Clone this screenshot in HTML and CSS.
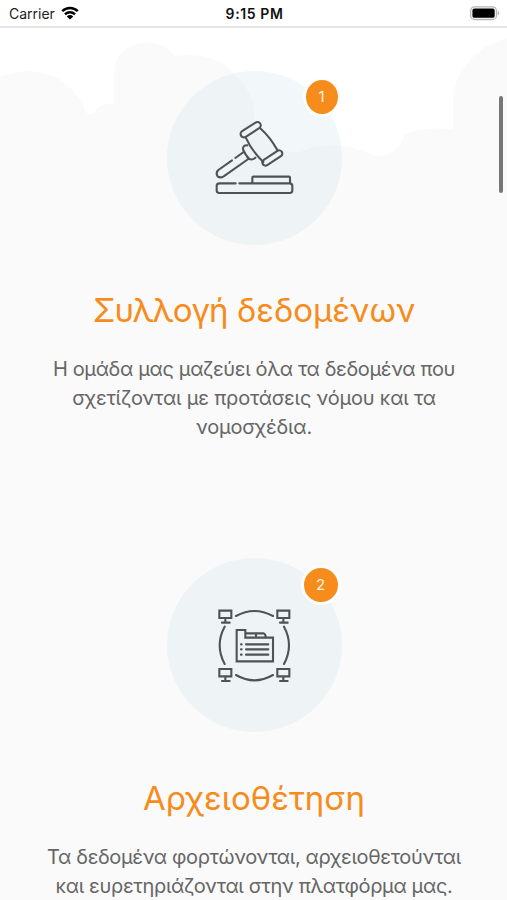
FILE: index.html
```html
<!DOCTYPE html>
<html lang="el">
<head>
    <meta charset="UTF-8">
    <meta name="viewport" content="width=device-width, initial-scale=1.0">
    <title>Συλλογή δεδομένων</title>
    <link rel="stylesheet" href="styles.css">
</head>
<body>
    <div class="status-bar">
        <div class="carrier">
            <span>Carrier</span>
            <svg class="wifi" viewBox="0 0 18 14">
                <path d="M1.2 5.2a11.2 11.2 0 0 1 15.6 0M4 8.3a7.2 7.2 0 0 1 10 0" fill="none" stroke="#000" stroke-width="2.5"/>
                <path d="M9 13.6 5.8 10.4a4.6 4.6 0 0 1 6.4 0z"/>
            </svg>
        </div>
        <div class="time">9:15 PM</div>
        <div class="battery-wrap">
            <svg class="battery" viewBox="0 0 31 15">
                <rect x=".7" y=".7" width="26.6" height="13" rx="4" fill="#fff" stroke="#b5b5b5" stroke-width="1.3"/>
                <rect x="2.5" y="2.4" width="23" height="9.6" rx="2"/>
                <path d="M28.7 5c2.1.6 2.1 3.8 0 4.4z" fill="#b5b5b5"/>
            </svg>
        </div>
    </div>

    <div class="steps">
        <svg class="clouds" viewBox="0 28 507 152">
            <path d="M0 180V77C30 64 62 74 76 95Q83 102 85 112Q92 118 98 107Q105 103 114 104V72C115 40 159 33 174 56C197 53 219 57 232 72C249 87 257 105 254 124C264 138 277 151 298 153C320 142 344 144 366 152Q379 159 391 153Q399 149 405 134Q422 127 453 129V99C454 72 478 45 507 38V180z"/>
        </svg>

        <div class="step">
            <div class="step-icon">
                <svg class="icon" viewBox="-3 -6 270 270">
                    <rect x="88" y="34" width="68" height="20" rx="10" transform="rotate(-33 122 44)"/>
                    <rect x="153" y="119.500" width="68" height="19" rx="9.500" transform="rotate(-33 187 129)"/>
                    <path d="M150 39Q181 67 202 105M107 67Q125 108 160 141"/>
                    <path d="M112 91Q98 90 99 103Q106 119 117 131Q126 137 136 128M101 109l15 23"/>
                    <path d="M66 136 25 165Q16 174 23 184Q31 190 41 184L115 132M76 129 101 111"/>
                    <path d="M77 205H28q-8 0-8 8v13q0 8 8 8h211q8 0 8-8v-13q0-8-8-8H88M127 205v-17q0-3 3-3h107q3 0 3 3v17"/>
                </svg>
                <span class="badge badge-first">1</span>
            </div>
            <h2><span class="tight">Συλλογή</span> δεδομένων</h2>
            <p>Η ομάδα μας μαζεύει όλα τα δεδομένα που<br><span class="loose">σχετίζονται με προτάσεις νόμου και τα</span><br><span class="loose">νομοσχέδια.</span></p>
        </div>

        <div class="step">
            <div class="step-icon">
                <svg class="icon icon-archive" viewBox="-21 -18 270 270">
                    <g id="screen">
                        <path d="M10 14h36v22H10zM28 36v14M18 50h23"/>
                    </g>
                    <use href="#screen" x="174"/>
                    <use href="#screen" y="175"/>
                    <use href="#screen" x="174" y="175"/>
                    <path d="M60 30Q115 0 171 30M60 207Q115 239 171 207M26 62Q-4 117 26 174M204 62Q234 117 204 174"/>
                    <path d="M62 72h26v23h83v71H62zM88 82h32v13M120 82h22q6 1 8 13M90 115h67M90 130h67M90 146h67M75 115h2M75 130h2M75 146h2"/>
                </svg>
                <span class="badge">2</span>
            </div>
            <h2 class="lower">Αρχειοθέτηση</h2>
            <p>Τα δεδομένα φορτώνονται, αρχειοθετούνται<br>και ευρετηριάζονται στην πλατφόρμα μας.</p>
        </div>
    </div>

    <div class="scrollbar"></div>
</body>
</html>
```

FILE: styles.css
```css
:root {
    --primary-color: #f68c1b;
    --text-color: #666666;
    --icon-color: #505354;
    --section-bg: #fafafa;
}

* {
    box-sizing: border-box;
}

body {
    height: 900px;
    margin: 0;
    overflow: hidden;
    font-family: Inter, "Noto Sans", sans-serif;
    color: var(--text-color);
    background-color: var(--section-bg);
}

.status-bar {
    display: flex;
    align-items: center;
    height: 28px;
    padding: 0 7px 0 9px;
    border-bottom: 2px solid #e6e6e6;
    background: #fff;
    color: #222;
    font-size: 14px;
}

.carrier,
.battery-wrap {
    display: flex;
    flex: 1;
    align-items: center;
}

.carrier {
    gap: 6px;
}

.battery-wrap {
    justify-content: flex-end;
}

.wifi {
    width: 18px;
    height: 14px;
}

.battery {
    width: 30px;
    height: 15px;
}

.time {
    font-weight: 600;
    letter-spacing: 0.6px;
    color: #111;
}

.steps {
    position: relative;
    height: 872px;
    padding: 43px 0 0 1px;
    overflow: hidden;
}

.clouds {
    position: absolute;
    top: 0;
    left: 0;
    width: 507px;
    height: 152px;
    background: #fff;
    fill: var(--section-bg);
}

.step {
    position: relative;
    display: flex;
    flex-direction: column;
    align-items: center;
    height: 487px;
    text-align: center;
}

.step-icon {
    position: relative;
    display: flex;
    align-items: center;
    justify-content: center;
    width: 175px;
    height: 174px;
    border-radius: 50%;
    background: rgba(210, 225, 235, 0.28);
}

.icon {
    width: 90px;
    height: 90px;
    fill: none;
    stroke: var(--icon-color);
    stroke-width: 6.3;
    stroke-linecap: round;
    stroke-linejoin: round;
}

.icon-archive {
    stroke-linejoin: miter;
}

.badge {
    position: absolute;
    top: 7px;
    right: 1px;
    width: 40px;
    height: 40px;
    border: 3px solid #fdfdfd;
    border-radius: 50%;
    background: var(--primary-color);
    color: #fff3e4;
    font-size: 15px;
    line-height: 34px;
}

.badge-first {
    top: 6px;
    width: 38px;
}

h2 {
    margin: 43px 0 0;
    color: var(--primary-color);
    font-size: 33px;
    font-weight: 400;
    line-height: 44px;
}

h2.lower {
    margin-top: 44px;
}

.tight {
    letter-spacing: -1px;
}

p {
    margin: 23px 0 0;
    font-size: 20px;
    letter-spacing: -0.35px;
    line-height: 29px;
    white-space: nowrap;
}

.loose {
    letter-spacing: -0.2px;
}

.scrollbar {
    position: absolute;
    top: 96px;
    right: 4px;
    width: 4px;
    height: 97px;
    border-radius: 2px;
    background: #777;
}
```
